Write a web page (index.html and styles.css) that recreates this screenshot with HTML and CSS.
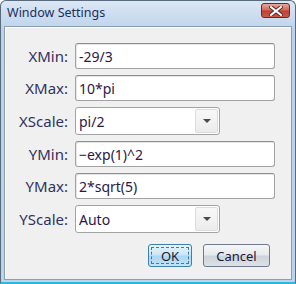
FILE: index.html
```html
<!DOCTYPE html>
<html lang="en">
  <head>
    <meta charset="UTF-8" />
    <title>Window Settings</title>
    <link rel="stylesheet" href="styles.css">
  </head>
  <body>
    <div class="window">
      <div class="titlebar">
        <span class="title">Window Settings</span>
        <button type="button" class="close-btn" aria-label="Close">
          <svg width="14" height="10" viewBox="0 0 14 10">
            <path d="M2 1 L12 9 M12 1 L2 9" stroke="#5a2a24" stroke-width="4" stroke-linecap="square" />
            <path d="M2 1 L12 9 M12 1 L2 9" stroke="#ffffff" stroke-width="2" stroke-linecap="square" />
          </svg>
        </button>
      </div>
      <div class="client">
        <form class="settings">
          <label>XMin:</label>
          <input type="text" class="field" value="-29/3" />
          <label>XMax:</label>
          <input type="text" class="field" value="10*pi" />
          <label>XScale:</label>
          <div class="combo">
            <span class="combo-value">pi/2</span>
            <span class="combo-btn"><span class="arrow"></span></span>
          </div>
          <label>YMin:</label>
          <input type="text" class="field" value="&minus;exp(1)^2" />
          <label>YMax:</label>
          <input type="text" class="field" value="2*sqrt(5)" />
          <label>YScale:</label>
          <div class="combo">
            <span class="combo-value">Auto</span>
            <span class="combo-btn"><span class="arrow"></span></span>
          </div>
        </form>
        <div class="buttons">
          <button type="button" class="btn btn-default"><span class="focus">OK</span></button>
          <button type="button" class="btn">Cancel</button>
        </div>
      </div>
    </div>
  </body>
</html>
```

FILE: styles.css
```css
body {
  margin: 0;
  padding: 0;
  font-family: "Noto Sans", "Open Sans", sans-serif;
}
.window {
  width: 296px;
  height: 284px;
  box-sizing: border-box;
  border: 1px solid #5b6b7e;
  border-bottom: 2px solid #2fb6e0;
  border-radius: 6px 6px 0 0;
  background: linear-gradient(#dbe7f5, #bcd2ea 30px, #bdd3eb);
  display: flex;
  flex-direction: column;
}
.titlebar {
  height: 25px;
  display: flex;
  align-items: center;
  justify-content: space-between;
  padding: 0 5px 0 6px;
}
.title {
  font-size: 12.5px;
  color: #1e2e5c;
  margin-top: -2px;
}
.close-btn {
  width: 29px;
  height: 15px;
  margin-top: -6px;
  padding: 0;
  border: 1px solid #6b2a22;
  border-radius: 3px;
  background: linear-gradient(#e8a99c, #d06a58 45%, #c0402f 55%, #c9584a);
  display: flex;
  align-items: center;
  justify-content: center;
}
.client {
  flex: 1;
  margin: 0 3px 2px;
  background: #f0f0f0;
  border: 1px solid #8b9db3;
  box-shadow: inset 1px 1px 0 #ffffff;
  display: flex;
  flex-direction: column;
}
.settings {
  display: grid;
  grid-template-columns: 63px 200px;
  column-gap: 7px;
  row-gap: 6px;
  margin-top: 16px;
}
.settings label {
  text-align: right;
  align-self: center;
  font-size: 15px;
  color: #33305e;
}
.field {
  height: 26px;
  box-sizing: border-box;
  border: 1px solid #a3a3a3;
  border-top-color: #8e8e8e;
  border-radius: 3px;
  box-shadow: inset 1px 1px 0 #e6e6e6;
  background: #fff;
  padding: 0 3px;
  font-family: inherit;
  font-size: 14px;
  color: #2a1848;
  outline: none;
}
.combo {
  width: 145px;
  height: 28px;
  box-sizing: border-box;
  border: 1px solid #a3a3a3;
  border-radius: 3px;
  background: #fff;
  display: flex;
  align-items: center;
  justify-content: space-between;
}
.combo-value {
  padding-left: 3px;
  font-size: 14px;
  color: #2a1848;
}
.combo-btn {
  width: 23px;
  height: 24px;
  margin-right: 1px;
  box-sizing: border-box;
  border: 1px solid #dcdcdc;
  border-radius: 2px;
  background: linear-gradient(#f8f8f8, #ececec);
  display: flex;
  align-items: center;
  justify-content: center;
}
.arrow {
  width: 0;
  height: 0;
  border-left: 4px solid transparent;
  border-right: 4px solid transparent;
  border-top: 4px solid #4a4a4a;
}
.buttons {
  display: flex;
  justify-content: flex-end;
  gap: 11px;
  margin-top: 11px;
  padding-right: 21px;
}
.btn {
  height: 23px;
  width: 67px;
  padding: 0;
  box-sizing: border-box;
  border: 1px solid #707a88;
  border-radius: 3px;
  background: linear-gradient(#f4f6f8, #e6e9ee 48%, #cdd3db 52%, #dde1e7);
  font-family: inherit;
  font-size: 13px;
  color: #1a1a30;
}
.btn-default {
  width: 44px;
  border-color: #3c7fb1;
  background: linear-gradient(#e6f4fc, #cbe7f7 48%, #a9d7f1 52%, #c3e3f5);
  padding: 2px;
}
.focus {
  display: flex;
  align-items: center;
  justify-content: center;
  height: 100%;
  border: 1px dashed #2d7fb3;
  box-sizing: border-box;
}
```
